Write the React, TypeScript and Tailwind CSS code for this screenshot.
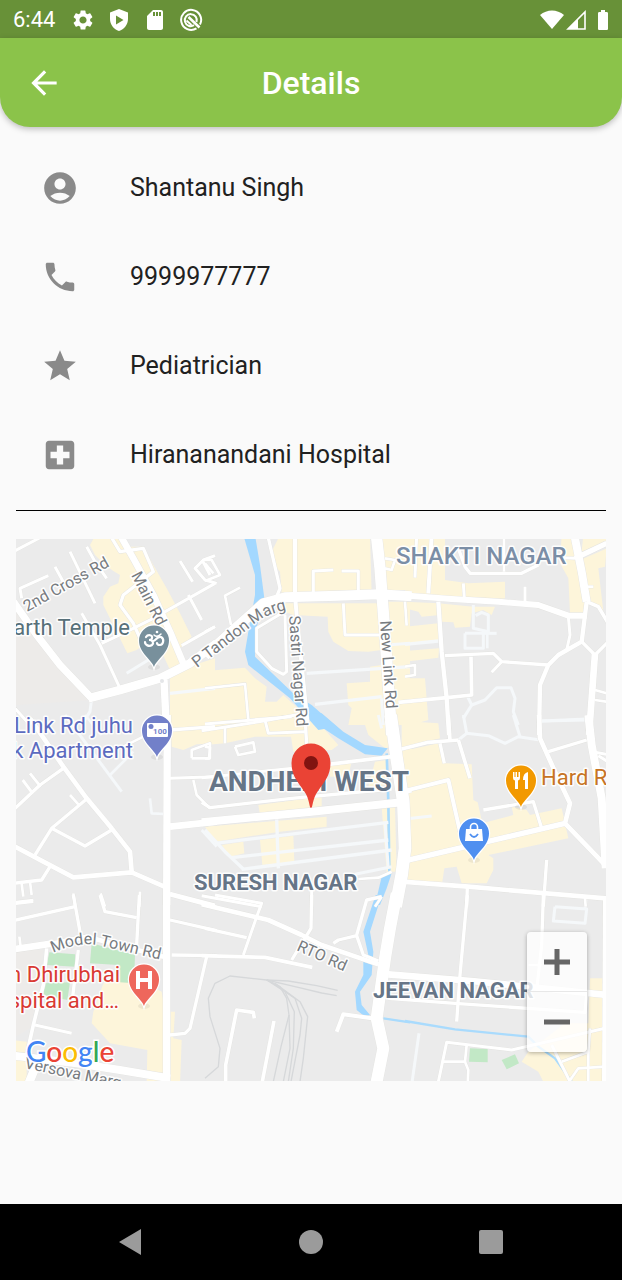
import type { ReactNode } from "react";
import {
  MdAccountCircle,
  MdArrowBack,
  MdBatteryFull,
  MdLocalHospital,
  MdPhone,
  MdSdStorage,
  MdSettings,
  MdStar,
} from "react-icons/md";

type Road = [width: number, points: string];

interface Tile {
  x: number;
  y: number;
  built: string[];
  ground?: string[];
  parks?: string[];
  water?: string[];
  streams?: Road[];
  lanes?: Road[];
  roads: Road[];
  rails?: string[];
}

// Map geometry, one entry per tile. Tile coordinates are three units per map unit.
const tiles: Tile[] = [
  {
    x: 10,
    y: 535,
    built: [
      "240,30 250,12 330,12 345,35 400,35 430,90 470,160 510,235 545,305 530,320 510,340 515,395 480,405 455,350 400,330 380,345 352,355 320,290 280,210 280,185 300,155 325,145 330,120 310,108 285,90 255,60",
      "480,475 480,430 520,400 615,370 615,570 480,570",
    ],
    lanes: [
      [9, "350,415 415,375"],
      [10, "480,475 615,460"],
      [9, "245,490 240,530 215,570"],
    ],
    roads: [
      [22, "10,200 80,300 150,390 245,490"],
      [26, "235,490 330,465 450,430 540,385 620,325"],
      [20, "330,0 370,70 430,180 480,290 520,385"],
      [22, "462,435 470,600"],
      [9, "10,50 105,0"],
      [9, "180,50 255,205"],
      [9, "230,35 255,80 290,130"],
      [9, "135,95 165,150"],
      [9, "115,122 30,160 35,190"],
      [10, "300,0 330,50 400,40 430,110 340,180 330,210 370,265 390,310"],
      [9, "215,235 270,330 330,460"],
      [9, "275,325 350,290 430,250 615,145"],
      [9, "510,78 548,140"],
      [9, "535,180 575,255"],
      [9, "615,62 580,75 555,100 585,135 620,145"],
      [9, "578,78 600,120"],
      [9, "515,332 615,275"],
      [9, "10,515 60,570"],
    ],
  },
  {
    x: 205,
    y: 535,
    built: [
      "0,408 120,398 150,430 185,455 180,500 215,500 235,480 300,540 330,570 330,600 0,600",
      "225,0 495,0 500,180 230,175 225,110 200,80 205,40",
      "240,205 525,205 530,345 490,350 430,348 385,320 370,290 368,245 265,240 240,230",
      "425,445 495,440 495,395 530,390 540,570 430,570 440,520 430,510",
      "530,0 615,0 615,165 545,165",
      "545,200 615,200 615,570 560,570",
    ],
    water: [
      "115,0 150,0 165,90 178,190 160,260 150,290 150,365 270,480 320,510 395,575 340,585 255,490 130,390 120,350 130,290 150,180 150,120",
    ],
    lanes: [
      [10, "305,415 615,395"],
      [10, "330,508 530,485"],
      [9, "545,330 615,325"],
      [9, "530,490 535,570"],
    ],
    roads: [
      [30, "0,362 90,280 175,205 240,187 400,182 520,178 620,184"],
      [34, "514,0 525,100 540,300 560,600"],
      [10, "188,0 225,160 215,185"],
      [12, "270,0 270,180 275,240 308,570"],
      [9, "325,175 325,108 385,105"],
      [9, "410,108 460,108 460,170"],
      [9, "415,205 420,300 525,300"],
      [9, "230,235 155,280 155,350 200,400 235,418 245,410 240,240"],
      [8, "0,460 120,447 130,555"],
      [9, "0,567 260,545"],
      [8, "105,158 60,182 78,270"],
      [8, "0,75 20,75 45,120 0,138"],
      [8, "0,85 25,115"],
      [8, "0,290 30,275"],
      [8, "540,70 570,75 560,105 540,100"],
      [8, "600,200 605,272"],
    ],
  },
  {
    x: 405,
    y: 535,
    built: [
      "0,0 120,0 120,135 190,145 300,140 300,190 260,200 0,175",
      "0,200 100,205 205,215 270,215 260,240 235,225 200,235 195,275 150,278 145,262 110,260 105,240 50,245 40,230 0,220",
      "0,275 100,265 102,315 0,325",
      "0,348 102,340 100,368 0,380",
      "0,430 60,430 70,555 0,575",
      "470,0 500,0 545,210 545,235 495,235 490,130 465,85",
      "525,75 605,40 600,95 580,100 595,230 550,200 545,160",
      "535,0 605,0 605,20 530,50",
    ],
    lanes: [
      [10, "0,328 100,318"],
      [9, "205,210 205,280 250,290 250,240 230,232 212,242"],
      [9, "180,295 235,295 235,340 180,340 180,295"],
      [9, "235,295 275,295"],
      [8, "247,290 247,340"],
      [9, "188,485 200,510 240,495 275,458 318,458 330,490 325,530 340,570"],
      [9, "200,510 175,550"],
      [9, "410,558 545,552"],
    ],
    roads: [
      [18, "-20,180 140,192 280,200 400,210 490,242 545,242"],
      [12, "80,0 70,175"],
      [10, "160,40 180,95 195,115 350,115 400,90"],
      [8, "297,0 297,110"],
      [9, "35,0 30,128"],
      [9, "175,145 178,190"],
      [9, "360,155 360,210"],
      [13, "100,200 110,350 125,490 132,600"],
      [10, "120,362 265,355 290,380 430,390"],
      [9, "290,380 260,412"],
      [11, "-20,502 125,488 200,480 198,365"],
      [24, "508,0 530,110 545,200"],
      [13, "545,200 530,320 460,360 430,390 405,450 402,600"],
      [9, "490,245 495,300 485,345"],
      [10, "530,320 570,360 610,320"],
      [20, "570,355 552,600"],
      [11, "545,200 580,215 610,265"],
      [16, "510,70 605,25"],
      [9, "470,68 510,70"],
      [8, "545,155 565,155"],
      [8, "570,465 605,475"],
      [8, "570,495 605,500"],
      [8, "0,395 30,390 30,420 0,425"],
    ],
  },
  {
    x: 10,
    y: 715,
    built: ["480,0 615,0 615,85 560,88 520,105 485,95"],
    lanes: [
      [9, "165,0 250,115 335,230"],
      [8, "300,180 370,110"],
      [8, "225,0 275,60"],
      [8, "420,250 425,295 465,297"],
      [8, "575,345 620,395"],
    ],
    roads: [
      [22, "472,0 470,570"],
      [14, "60,10 160,155 230,250 305,340 360,410 365,470"],
      [10, "10,285 90,210 160,160"],
      [9, "38,195 68,235"],
      [9, "60,175 92,215"],
      [10, "230,252 125,340 75,420"],
      [8, "180,240 205,268"],
      [10, "125,340 225,393 305,345"],
      [14, "10,392 100,440 190,487 365,472 470,518"],
      [10, "120,455 95,495 10,505"],
      [8, "35,505 40,545"],
      [8, "60,500 65,540"],
      [8, "10,567 70,560"],
      [8, "340,95 400,65"],
      [20, "480,335 620,320"],
      [9, "480,190 615,185"],
      [8, "550,195 560,240 600,280"],
      [8, "545,130 545,105 600,85 600,130 545,130"],
      [10, "480,45 615,35"],
      [10, "480,535 615,570"],
      [8, "190,535 195,570"],
      [8, "272,535 285,575"],
      [8, "390,530 388,575"],
    ],
  },
  {
    x: 205,
    y: 715,
    built: [
      "0,0 320,0 400,90 380,105 265,110 258,65 150,65 60,85 0,90",
      "0,335 365,305 365,335 225,350 30,380",
      "160,270 350,245 350,290 165,300",
      "165,375 265,362 268,440 172,450",
      "50,390 115,380 118,415 75,425",
      "470,0 545,0 560,95 540,100 490,60",
      "375,142 440,138 430,185 375,185",
      "530,275 570,275 575,470 545,470",
      "510,140 545,135 550,210 490,215",
      "590,0 620,0 620,500 590,490",
    ],
    water: [
      "305,-5 350,-5 415,50 480,90 548,100 530,122 480,118 400,70 340,30",
      "530,485 560,475 545,520 525,570 510,570",
    ],
    streams: [[8, "545,115 550,260 553,470"]],
    lanes: [
      [10, "30,385 550,322"],
      [10, "80,428 550,375"],
      [10, "110,463 560,405"],
      [10, "215,310 220,460"],
      [10, "0,345 60,410 115,462"],
      [9, "540,325 550,460"],
      [9, "450,478 560,455"],
      [9, "520,0 530,40"],
    ],
    roads: [
      [24, "-10,322 320,290 590,262"],
      [38, "557,0 575,130 595,260 600,400 590,480 572,575"],
      [9, "-10,47 175,18 300,-5"],
      [8, "60,35 60,85"],
      [9, "180,15 190,55 300,50"],
      [10, "300,0 305,90"],
      [8, "0,95 15,98 12,130 0,130"],
      [8, "90,95 145,82 150,110 100,120 90,95"],
      [9, "-10,188 265,160"],
      [11, "370,148 560,125"],
      [10, "-10,262 15,278 260,250 560,222"],
      [9, "590,235 620,228"],
      [8, "460,492 520,488 560,470"],
      [9, "-10,542 170,575"],
      [9, "320,520 320,575"],
      [8, "510,575 530,545"],
    ],
  },
  {
    x: 405,
    y: 715,
    built: [
      "0,0 30,0 30,20 100,25 105,70 0,100",
      "-15,110 100,85 120,145 200,148 205,255 218,262 232,325 325,300 320,275 365,285 375,300 470,280 490,370 250,420 265,430 265,465 245,505 170,505 155,455 118,460 112,500 0,500",
    ],
    lanes: [
      [9, "160,75 185,55 250,62 300,85 340,65 405,75"],
      [9, "175,0 185,55"],
      [9, "325,0 345,65"],
      [9, "410,18 545,15"],
      [9, "0,312 80,303"],
    ],
    roads: [
      [11, "-10,102 70,82 160,75"],
      [11, "130,0 135,75"],
      [10, "105,85 118,145"],
      [11, "160,75 195,190"],
      [12, "-10,230 130,195 165,350"],
      [16, "-10,440 160,400 480,325"],
      [10, "235,285 385,260 410,340"],
      [14, "402,0 405,70 450,170 495,265 480,325 605,455"],
      [10, "430,110 545,75"],
      [24, "550,0 560,90 590,250 602,460"],
      [9, "570,112 605,118"],
      [9, "580,122 605,138"],
      [14, "-10,500 190,515 610,551"],
      [10, "187,515 185,575"],
      [10, "425,435 415,575"],
      [8, "540,550 542,575"],
    ],
  },
  {
    x: 10,
    y: 895,
    ground: ["0,165 100,165 90,270 60,400 0,435"],
    built: [
      "280,265 350,250 400,260 455,290 465,350 495,350 490,430 515,435 510,570 410,570 412,465 300,445 245,385 250,350",
      "0,435 50,440 50,560 0,560",
    ],
    parks: [
      "118,172 195,178 195,215 110,210",
      "245,145 375,180 372,265 330,262 325,210 240,205",
      "100,265 180,262 172,315 100,300",
    ],
    roads: [
      [22, "470,0 470,570"],
      [10, "10,77 195,35"],
      [10, "190,0 210,110"],
      [10, "270,0 285,50 380,68"],
      [10, "388,0 380,150"],
      [20, "10,163 130,145"],
      [8, "28,125 32,155"],
      [8, "10,22 70,15"],
      [14, "130,145 230,125 460,185"],
      [11, "110,160 100,270 70,390 50,480"],
      [9, "75,390 185,415"],
      [24, "10,482 200,505 330,525 480,550"],
      [26, "52,575 85,495"],
      [10, "205,165 185,330"],
      [10, "480,0 620,37"],
      [10, "480,75 620,107"],
      [10, "485,180 620,182"],
      [10, "590,185 540,400 525,415 480,420"],
    ],
  },
  {
    x: 205,
    y: 895,
    built: [],
    water: [
      "512,0 530,0 495,110 505,170 500,240 465,290 470,330 495,360 480,365 455,345 450,290 475,240 475,195 490,180 475,110",
    ],
    streams: [[7, "535,370 615,382"]],
    roads: [
      [14, "-10,28 190,75 290,120 350,150 520,208"],
      [9, "30,0 170,25 155,65 115,180"],
      [10, "0,100 125,128"],
      [11, "-10,182 180,187 322,217"],
      [10, "320,0 318,100 260,195"],
      [10, "385,145 400,135 455,122 475,180 520,198"],
      [10, "455,120 485,15 530,5"],
      [12, "395,410 415,358 500,370"],
      [11, "62,570 62,510 95,345 145,352 148,370"],
      [11, "170,570 207,378"],
      [36, "575,-5 555,100 540,190 515,370 535,460 512,575"],
    ],
    rails: [
      "0,550 40,515 45,460 15,365 10,310 30,265 75,243 185,255 225,275 245,310 252,360 228,455 205,560",
      "185,255 250,258 335,272 398,286",
      "185,255 270,275 350,294 395,302",
      "185,255 240,290 268,350 265,460 250,560",
      "200,262 270,310 290,370 285,420 258,560",
      "210,265 285,320 308,365 295,490 285,560",
      "252,360 255,460 235,560",
    ],
  },
  {
    x: 405,
    y: 895,
    built: [
      "555,250 600,250 605,570 420,570 400,530 350,500 370,470 480,385 550,385",
    ],
    parks: ["195,460 248,462 248,502 192,500", "290,495 330,478 342,505 305,523"],
    streams: [[7, "0,378 150,403 370,425 400,455 450,490 500,560"]],
    lanes: [
      [9, "450,35 545,42 540,85 445,78 450,35"],
      [8, "545,0 540,40"],
      [9, "42,415 20,570"],
    ],
    roads: [
      [20, "-50,238 200,258 605,300"],
      [10, "-50,310 150,325 540,352 545,300"],
      [10, "187,0 165,240 155,380"],
      [10, "415,0 410,150 395,285"],
      [8, "370,210 410,210"],
      [9, "98,570 125,442 320,465 600,400"],
      [8, "110,500 180,500 190,525 188,570"],
      [8, "185,450 180,500"],
      [12, "600,10 597,570"],
      [8, "555,400 550,470 470,500"],
      [9, "440,450 500,570"],
      [8, "485,570 520,520 600,515"],
      [8, "550,470 550,570"],
    ],
  },
];

function Layer({ render }: { render: (tile: Tile) => ReactNode }) {
  return (
    <>
      {tiles.map((tile) => (
        <g
          key={`${tile.x}-${tile.y}`}
          transform={`translate(${tile.x} ${tile.y}) scale(${1 / 3})`}
        >
          {render(tile)}
        </g>
      ))}
    </>
  );
}

function Areas({ shapes, fill }: { shapes?: string[]; fill: string }) {
  return (
    <>
      {shapes?.map((points) => (
        <polygon key={points} points={points} fill={fill} />
      ))}
    </>
  );
}

function Lines({ lines, stroke, grow = 0 }: { lines?: Road[]; stroke: string; grow?: number }) {
  return (
    <>
      {lines?.map(([width, points]) => (
        <polyline
          key={points}
          points={points}
          fill="none"
          stroke={stroke}
          strokeWidth={width + grow}
          strokeLinejoin="round"
        />
      ))}
    </>
  );
}

function Pin({ x, y, fill, children }: { x: number; y: number; fill: string; children: ReactNode }) {
  return (
    <g transform={`translate(${x} ${y})`}>
      <ellipse cx="0" cy="0" rx="6" ry="3" fill="#000" opacity="0.06" />
      <path
        d="M0 0C-2-7-15-14-15-26.500A15 15 0 0 1 15-26.500C15-14 2-7 0 0Z"
        fill={fill}
        stroke="#fff"
        strokeWidth="2.500"
        paintOrder="stroke"
      />
      {children}
    </g>
  );
}

const halo = "[paint-order:stroke] stroke-white/90 [stroke-width:3px] [stroke-linejoin:round]";
const road = `${halo} fill-[#777b80] text-[16px]`;
const place = `${halo} text-[22px]`;
const area = `${halo} fill-[#667587] font-bold`;

function MapDrawing() {
  return (
    <svg
      viewBox="16 539 590 542"
      preserveAspectRatio="xMidYMid slice"
      className="block h-[542px] w-full font-[Roboto,sans-serif]"
      role="img"
      aria-label="Map of Andheri West"
    >
      <defs>
        <path id="tandon" d="M197 668L256 623Q266 614 290 609" />
        <path id="model-town" d="M53 953Q76 942 98 945L175 963" />
      </defs>
      <rect x="16" y="539" width="590" height="542" fill="#ebebeb" />
      <polygon points="16,610 92,700 16,705" fill="#edebe9" />
      <Layer render={(t) => <Areas shapes={t.ground} fill="#edebe9" />} />
      <Layer render={(t) => <Areas shapes={t.built} fill="#fdf5da" />} />
      <Layer render={(t) => <Areas shapes={t.parks} fill="#c2e8c6" />} />
      <Layer render={(t) => <Areas shapes={t.water} fill="#a3d8ff" />} />
      <Layer render={(t) => <Lines lines={t.streams} stroke="#a9dbfd" />} />
      <Layer
        render={(t) => (
          <Lines lines={t.rails?.map((points): Road => [4, points])} stroke="#d6d8da" />
        )}
      />
      <Layer render={(t) => <Lines lines={t.lanes} stroke="#f5f8fa" />} />
      <Layer render={(t) => <Lines lines={t.roads} stroke="#e3e3e0" grow={2} />} />
      <Layer render={(t) => <Lines lines={t.roads} stroke="#ffffff" />} />
      <circle cx="162" cy="681" r="2" fill="#e4e6e8" />

      <text transform="translate(27 612) rotate(-29)" className={road}>2nd Cross Rd</text>
      <text transform="translate(131 575) rotate(63)" className={road}>Main Rd</text>
      <text className={road}><textPath href="#tandon">P Tandon Marg</textPath></text>
      <text transform="translate(289 616) rotate(86)" className={road}>Sastri Nagar Rd</text>
      <text transform="translate(380 621) rotate(86)" className={road}>New Link Rd</text>
      <text transform="translate(296 950) rotate(24)" className={road}>RTO Rd</text>
      <text className={road}><textPath href="#model-town">Model Town Rd</textPath></text>
      <text transform="translate(24 1068) rotate(12)" className={road}>Versova Marg</text>

      <text x="396" y="564" className={`${halo} fill-[#7b8ea6] text-[24px] font-medium`}>SHAKTI NAGAR</text>
      <text x="209" y="791" className={`${area} text-[28px]`}>ANDHERI WEST</text>
      <text x="194" y="890" className={`${area} text-[22px]`}>SURESH NAGAR</text>
      <text x="373" y="998" className={`${area} text-[22px]`}>JEEVAN NAGAR</text>

      <text x="130" y="635" textAnchor="end" className={`${place} fill-[#577079]`}>arth Temple</text>
      <text x="133" y="733" textAnchor="end" className={`${place} fill-[#5c6bc0]`}>Link Rd juhu</text>
      <text x="133" y="758" textAnchor="end" className={`${place} fill-[#5c6bc0]`}>k Apartment</text>
      <text x="120" y="982" textAnchor="end" className={`${place} fill-[#d93a33]`}>n Dhirubhai</text>
      <text x="119" y="1008" textAnchor="end" className={`${place} fill-[#d93a33]`}>spital and…</text>
      <text x="541" y="785" className={`${place} fill-[#c77424]`}>Hard R</text>

      <Pin x={154} y={667} fill="#78909c">
        <g fill="none" stroke="#fff" strokeWidth="2.200" strokeLinecap="round">
          <path d="M-8-30C-6-33-1-32-2-29C-2-27-4-27-5-27C-1-27 0-24-2-22C-5-20-9-22-9-25" />
          <path d="M-1-26C2-26 3-31 7-30C11-28 9-22 6-22C4-22 3-23 3-24" />
          <path d="M0-32Q3-29 7-33" strokeWidth="1.500" />
        </g>
        <circle cx="3" cy="-35" r="1.300" fill="#fff" />
      </Pin>
      <Pin x={157} y={757} fill="#7280c9">
        <rect x="-10" y="-34" width="21" height="14" rx="1" fill="#fff" />
        <circle cx="-6" cy="-30.500" r="2.500" fill="#7280c9" />
        <text x="3" y="-23" textAnchor="middle" className="fill-[#7280c9] text-[8px] font-bold">100</text>
      </Pin>
      <Pin x={521} y={807} fill="#f29900">
        <path
          d="M-8-35V-29Q-8-27-6-26.500V-18H-3V-26.500Q-1-27-1-29V-35H-2.500V-30H-4V-35H-5.500V-30H-6.500V-35ZM7-35Q2-34 2-27H4V-18H7Z"
          fill="#fff"
        />
      </Pin>
      <Pin x={474} y={860} fill="#4f8ff0">
        <path d="M-8-31H8L9-19H-9Z" fill="#fff" />
        <path d="M-3.500-31V-33A3.500 3.500 0 0 1 3.500-33V-31" fill="none" stroke="#fff" strokeWidth="1.600" />
        <path d="M-4-26Q0-20 4-26" fill="none" stroke="#4f8ff0" strokeWidth="1.800" />
      </Pin>
      <Pin x={144} y={1006} fill="#ee675c">
        <path d="M-6-35V-17M6-35V-17M-6-26H6" stroke="#fff" strokeWidth="4" />
      </Pin>

      <g transform="translate(311 808)">
        <path
          d="M0 0C-2 0-1-9-7-17C-13-26-19.500-32-19.500-45A19.500 19.500 0 0 1 19.500-45C19.500-32 13-26 7-17C1-9 2 0 0 0Z"
          fill="#ea4335"
        />
        <circle cx="0" cy="-45" r="7" fill="#811411" />
      </g>

      <text
        x="26"
        y="1062"
        className="stroke-white stroke-3 font-[Lato,sans-serif] text-[28px] font-medium [paint-order:stroke]"
      >
        <tspan fill="#4285f4">G</tspan>
        <tspan fill="#ea4335">o</tspan>
        <tspan fill="#fbbc05">o</tspan>
        <tspan fill="#4285f4">g</tspan>
        <tspan fill="#34a853">l</tspan>
        <tspan fill="#ea4335">e</tspan>
      </text>
    </svg>
  );
}

const details = [
  { Icon: MdAccountCircle, text: "Shantanu Singh" },
  { Icon: MdPhone, text: "9999977777" },
  { Icon: MdStar, text: "Pediatrician" },
  { Icon: MdLocalHospital, text: "Hirananandani Hospital" },
];

function StatusBar() {
  return (
    <div className="flex h-[38px] items-center bg-[#689138] pt-px pr-[7px] pl-[13px] text-white">
      <span className="text-[22px] leading-none">6:44</span>
      <MdSettings className="ml-4 size-6" />
      <svg viewBox="0 0 24 24" className="ml-3 size-6" fill="currentColor">
        <path
          fillRule="evenodd"
          d="M12 1L3 4.500V11C3 16.500 6.800 21.300 12 23C17.200 21.300 21 16.500 21 11V4.500ZM9 7.500L16.500 12L9 16.500Z"
        />
      </svg>
      <MdSdStorage className="ml-3 size-6" />
      <svg viewBox="0 0 24 24" className="ml-3 size-6" fill="none" stroke="currentColor">
        <path d="M17.500 20.300A10 10 0 1 1 21 16.500" strokeWidth="2" />
        <path d="M15 17.200A6 6 0 1 1 17.500 14" strokeWidth="2" />
        <path d="M9.500 9L20.500 19.500" strokeWidth="2.600" />
        <path d="M7.500 12.500L12.500 17" strokeWidth="2" />
      </svg>
      <svg viewBox="0 0 24 20" className="ml-auto h-5 w-6" fill="currentColor">
        <path d="M12 19L0 5C7-1 17-1 24 5Z" />
      </svg>
      <svg viewBox="0 0 20 20" className="ml-[2px] size-5">
        <path d="M19 2V19H2Z" fill="none" stroke="currentColor" strokeWidth="1.600" />
        <path d="M12 9V19H2Z" fill="currentColor" />
      </svg>
      <MdBatteryFull className="ml-[5px] size-6" />
    </div>
  );
}

export default function App() {
  return (
    <div className="flex min-h-screen flex-col bg-[#fafafa] font-[Roboto,sans-serif] text-[#212121]">
      <StatusBar />
      <header className="grid h-[89px] grid-cols-[88px_1fr_88px] items-center rounded-b-[30px] bg-[#8bc34a] text-white shadow-[0_2px_6px_rgba(0,0,0,0.25)]">
        <button type="button" aria-label="Back" className="flex size-full items-center justify-center">
          <MdArrowBack className="size-[38px]" />
        </button>
        <h1 className="text-center text-[32px] leading-10 font-medium">Details</h1>
      </header>

      <main className="px-4 pt-4">
        <ul>
          {details.map(({ Icon, text }) => (
            <li key={text} className="flex h-[89px] items-center gap-[51px] pl-[25px]">
              <Icon className="size-[38px] shrink-0 text-[#8a8a8a]" />
              <span className="text-[25px] leading-8">{text}</span>
            </li>
          ))}
        </ul>
        <hr className="mt-[11px] mb-7 border-t border-black" />

        <section className="relative overflow-hidden">
          <MapDrawing />
          <div className="absolute right-[19px] bottom-[29px] flex w-[60px] flex-col rounded-sm bg-white/80 shadow-[0_1px_4px_rgba(0,0,0,0.3)]">
            <button type="button" aria-label="Zoom in" className="flex h-[60px] items-center justify-center border-b border-[#e8e8e8]">
              <svg viewBox="0 0 28 28" className="size-7">
                <path d="M14 1V27M1 14H27" stroke="#666" strokeWidth="5" />
              </svg>
            </button>
            <button type="button" aria-label="Zoom out" className="flex h-[60px] items-center justify-center">
              <svg viewBox="0 0 28 28" className="size-7">
                <path d="M1 14H27" stroke="#666" strokeWidth="5" />
              </svg>
            </button>
          </div>
        </section>
      </main>

      <nav className="mt-auto flex h-[76px] items-center justify-center gap-[132px] bg-black">
        <button type="button" aria-label="Back" className="flex size-12 items-center justify-center">
          <svg viewBox="0 0 24 28" className="h-7 w-6" fill="#9b9b9b">
            <path d="M0 14L22 1V27Z" />
          </svg>
        </button>
        <button type="button" aria-label="Home" className="flex size-12 items-center justify-center">
          <span className="size-6 rounded-full bg-[#9b9b9b]" />
        </button>
        <button type="button" aria-label="Recent apps" className="flex size-12 items-center justify-center">
          <span className="size-6 rounded-xs bg-[#9b9b9b]" />
        </button>
      </nav>
    </div>
  );
}
